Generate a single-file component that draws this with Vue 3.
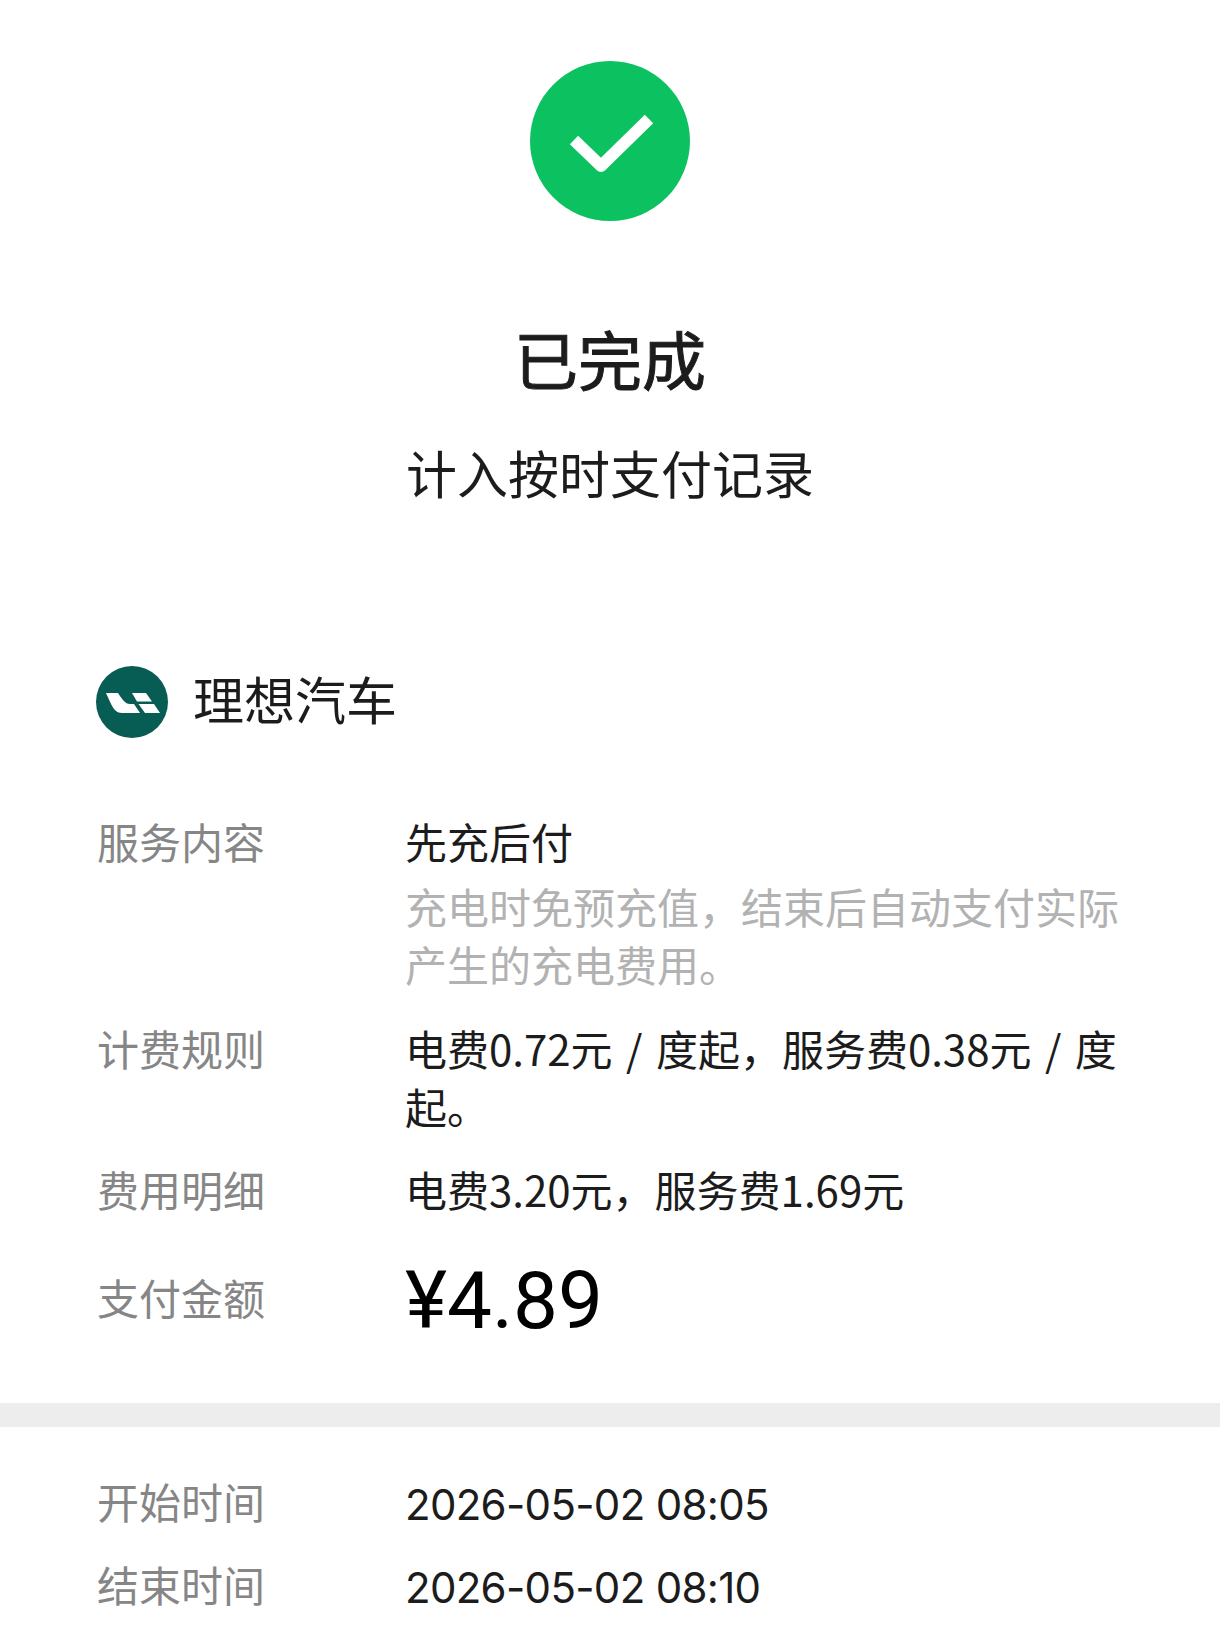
<template>
  <div class="page">
    <div class="status">
      <svg class="status-icon" viewBox="0 0 160 160">
        <circle cx="80" cy="80" r="80" fill="#0cc160" />
        <path d="M44 79 L71 105 L119 58" fill="none" stroke="#fff" stroke-width="12" stroke-linejoin="round" />
      </svg>
      <h1 class="status-title">已完成</h1>
      <p class="status-note">计入按时支付记录</p>
    </div>

    <div class="merchant">
      <svg class="merchant-logo" viewBox="0 0 72 72">
        <circle cx="36" cy="36" r="36" fill="#075c54" />
        <path d="M10 27 H22 C26 33 29 38 34 38 H38 L44 47 H26 C21 47 18 44 15 38 Z" fill="#fff" />
        <path d="M36 27 H50 L56 35.5 H41 Z" fill="#fff" />
        <path d="M42.5 38 H58 L64 47 H49 Z" fill="#fff" />
      </svg>
      <span class="merchant-name">理想汽车</span>
    </div>

    <div class="details">
      <div class="row row-service">
        <div class="label">服务内容</div>
        <div class="value">
          先充后付
          <div class="hint">充电时免预充值，结束后自动支付实际产生的充电费用。</div>
        </div>
      </div>
      <div class="row">
        <div class="label">计费规则</div>
        <div class="value rule">电费0.72元 / 度起，服务费0.38元 / 度起。</div>
      </div>
      <div class="row">
        <div class="label">费用明细</div>
        <div class="value">电费3.20元，服务费1.69元</div>
      </div>
      <div class="row row-amount">
        <div class="label">支付金额</div>
        <div class="amount">¥4.89</div>
      </div>
    </div>

    <div class="band"></div>

    <div class="times">
      <div class="row row-time" v-for="item in times" :key="item.label">
        <div class="label">{{ item.label }}</div>
        <div class="value time">{{ item.value }}</div>
      </div>
    </div>
  </div>
</template>

<script setup>
const times = [
  { label: '开始时间', value: '2026-05-02 08:05' },
  { label: '结束时间', value: '2026-05-02 08:10' }
]
</script>

<style>
html,
body {
  background: #fff;
}
</style>

<style scoped>
.page {
  width: 1220px;
  height: 1632px;
  overflow: hidden;
  background: #fff;
  color: #1c1c1c;
  font-family: "Noto Sans CJK SC", "Noto Sans", sans-serif;
}

.status {
  display: flex;
  flex-direction: column;
  align-items: center;
  padding-top: 61px;
}

.status-icon {
  width: 160px;
  height: 160px;
}

.status-title {
  margin: 96px 0 0;
  font-size: 64px;
  line-height: 80px;
  font-weight: 400;
  -webkit-text-stroke: 1px #1c1c1c;
}

.status-note {
  margin: 44px 0 0;
  font-size: 51px;
  line-height: 62px;
}

.merchant {
  display: flex;
  align-items: center;
  gap: 25px;
  margin-top: 163px;
  padding-left: 96px;
}

.merchant-logo {
  width: 72px;
  height: 72px;
}

.merchant-name {
  font-size: 51px;
  line-height: 64px;
  padding-bottom: 8px;
}

.details {
  margin-top: 74px;
  padding: 0 96px 0 97px;
}

.row {
  display: grid;
  grid-template-columns: 308px 1fr;
  font-size: 42px;
  line-height: 58px;
  margin-bottom: 25px;
}

.row-service {
  margin-bottom: 26px;
}

.label {
  color: #868686;
}

.hint {
  margin-top: 7px;
  color: #b2b2b2;
}

.rule {
  word-spacing: 4px;
}

.row-time {
  margin-bottom: 17px;
}

.time {
  font-family: "Inter", "Noto Sans", sans-serif;
  line-height: 66px;
  letter-spacing: -0.7px;
}

.row-amount {
  align-items: center;
  margin-top: 33px;
}

.amount {
  padding-top: 8px;
  font-family: "Roboto", "Noto Sans", sans-serif;
  font-size: 80px;
  line-height: 84px;
  color: #000;
}

.band {
  height: 24px;
  margin-top: 60px;
  background: #ededed;
}

.times {
  margin-top: 45px;
  padding: 0 96px 0 97px;
}
</style>
